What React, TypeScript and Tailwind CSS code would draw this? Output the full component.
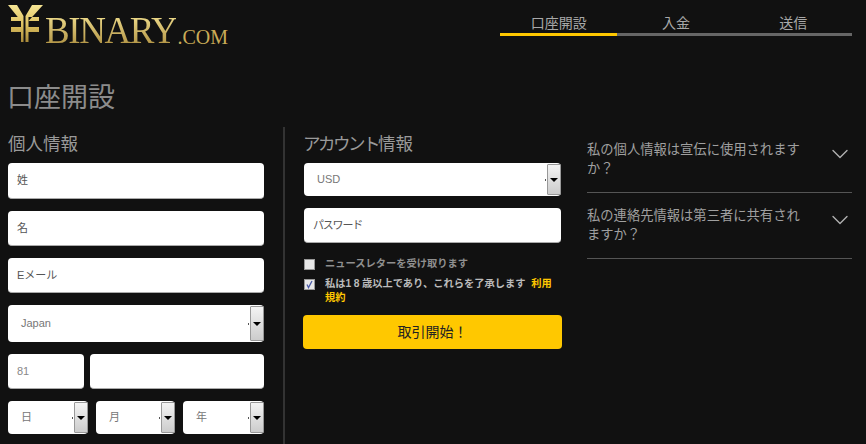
import React from "react";
import { ChevronDown } from "lucide-react";

const font = "font-['Liberation_Sans','Noto_Sans_CJK_JP',sans-serif]";

function YenMark() {
  return (
    <svg width="36" height="40" viewBox="0 0 36 40" className="shrink-0">
      <defs>
        <linearGradient id="gold" x1="0" y1="0" x2="0" y2="1">
          <stop offset="0" stopColor="#f6e594" />
          <stop offset="0.55" stopColor="#dcc060" />
          <stop offset="1" stopColor="#a98a3a" />
        </linearGradient>
      </defs>
      <path
        d="M0 1H9L15.5 12V38H13V17ZM35 1H24L17.5 12V38H20.5V17ZM3 13H13V17H3ZM3 23H13V28H3ZM20.5 13H31V17H20.5ZM20.5 23H31V28H20.5Z"
        fill="url(#gold)"
      />
    </svg>
  );
}

function Tab({ label, active }: { label: string; active?: boolean }) {
  return (
    <div
      className={`flex-1 text-center text-[14px] leading-[20px] border-b-[3px] text-[#a8a8a8] ${
        active ? "border-[#ffc800]" : "border-[#666666]"
      }`}
    >
      {label}
    </div>
  );
}

function Field({ label, className }: { label?: React.ReactNode; className?: string }) {
  return (
    <div
      className={`bg-white rounded-[4px] border-b border-[#aaaaaa] h-[35px] flex items-center pl-[9px] text-[11px] text-[#555555] ${className ?? ""}`}
    >
      {label}
    </div>
  );
}

function Select({ label, className }: { label: string; className?: string }) {
  return (
    <div className={`bg-white rounded-[4px] flex items-stretch text-[11px] text-[#777777] ${className ?? ""}`}>
      <div className="flex-1 flex items-center pl-[13px]">{label}</div>
      <span className="w-[1px] h-[2px] mr-[1px] self-center bg-[#555555]" />
      <div className="w-[14px] my-[1px] flex items-center justify-center bg-gradient-to-b from-[#f4f4f4] to-[#cccccc] border border-[#999999] rounded-[1px]">
        <span className="w-0 h-0 border-x-[4px] border-x-transparent border-t-[4px] border-t-black" />
      </div>
    </div>
  );
}

function Faq({ text }: { text: string }) {
  return (
    <div className="flex justify-between border-b border-[#555555] h-[66px] pt-[13px] text-[13.3px] leading-[19px] text-[#a0a0a0]">
      <p className="w-[213px]">{text}</p>
      <ChevronDown size={28} strokeWidth={1.2} className="-mr-[2px] text-[#b0b0b0]" />
    </div>
  );
}

export default function App() {
  return (
    <div className={`${font} w-[866px] h-[444px] overflow-hidden bg-[#111111]`}>
      <header className="h-[80px] flex justify-between pl-[8px] pr-[14px]">
        <div className="flex items-start pt-[4px]">
          <YenMark />
          <span className="font-['Liberation_Serif',serif] ml-[1px] mt-[8px] text-[37px] leading-[37px] tracking-[-1.4px] bg-gradient-to-b from-[#f6e594] to-[#a98a3a] bg-clip-text text-transparent">
            BINARY
          </span>
          <span className="font-['Liberation_Serif',serif] ml-[1px] mt-[23px] text-[20px] leading-[20px] text-[#c9ab57]">
            .COM
          </span>
        </div>
        <nav className="flex w-[352px] h-[23px] mt-[13px]">
          <Tab label="口座開設" active />
          <Tab label="入金" />
          <Tab label="送信" />
        </nav>
      </header>

      <h1 className="ml-[7px] mt-[1px] text-[27px] leading-[34px] text-[#8c8c8c]">口座開設</h1>

      <main className="flex mt-[12px]">
        <section className="w-[285px] pl-[8px] pr-[19px] pt-[4px] border-r-2 border-[#333333] h-[320px]">
          <h2 className="text-[17.5px] leading-[26px] text-[#9a9a9a] mb-[6px]">個人情報</h2>
          <div className="flex flex-col gap-[12px]">
            <Field label="姓" className="h-[36px]" />
            <Field label="名" />
            <Field label="Eメール" />
            <Select label="Japan" className="h-[37px]" />
            <div className="flex gap-[6px]">
              <Field label="81" className="w-[76px] text-[#888888]" />
              <Field className="flex-1" />
            </div>
            <div className="flex justify-between">
              <Select label="日" className="w-[80px] h-[33px]" />
              <Select label="月" className="w-[79px] h-[33px]" />
              <Select label="年" className="w-[81px] h-[33px]" />
            </div>
          </div>
        </section>

        <section className="w-[277px] pl-[18px] pt-[4px] shrink-0">
          <h2 className="text-[17.5px] leading-[26px] text-[#9a9a9a] mb-[6px]">
            <span className="tracking-[-2.5px]">アカウント</span>情報
          </h2>
          <div className="flex flex-col gap-[12px] mx-[1px]">
            <Select label="USD" className="h-[33px]" />
            <Field label={<span className="tracking-[-1.2px]">パスワード</span>} />
          </div>
          <div className="mt-[14px] text-[10.25px] font-bold leading-[14px] text-[#8f8f8f]">
            <div className="flex items-center h-[14px]">
              <span className="w-[11px] h-[11px] ml-[1px] mr-[10px] bg-[#e8e8e8] border border-[#999999]" />
              ニュースレターを受け取ります
            </div>
            <div className="flex mt-[6px]">
              <span className="w-[11px] h-[11px] mt-[2px] ml-[1px] mr-[10px] shrink-0 bg-[#e8e8e8] border border-[#999999] flex items-center justify-center">
                <svg width="9" height="9" viewBox="0 0 9 9">
                  <path d="M2 4.5L3.5 7.5L7 1" fill="none" stroke="#4a5aa8" strokeWidth="1.3" />
                </svg>
              </span>
              <p className="w-[228px] text-[#bbbbbb]">
                私は<span className="tracking-[2.5px]">18</span>歳以上であり、これらを了承します{" "}
                <span className="ml-[3px] text-[#ffc800]">利用</span>
                <br />
                <span className="text-[#ffc800]">規約</span>
              </p>
            </div>
          </div>
          <button className="mt-[10px] w-full h-[34px] rounded-[4px] bg-[#ffc800] text-[14px] text-[#222222]">
            取引開始！
          </button>
        </section>

        <aside className="w-[265px] ml-[25px] shrink-0">
          <Faq text="私の個人情報は宣伝に使用されますか？" />
          <Faq text="私の連絡先情報は第三者に共有されますか？" />
        </aside>
      </main>
    </div>
  );
}
